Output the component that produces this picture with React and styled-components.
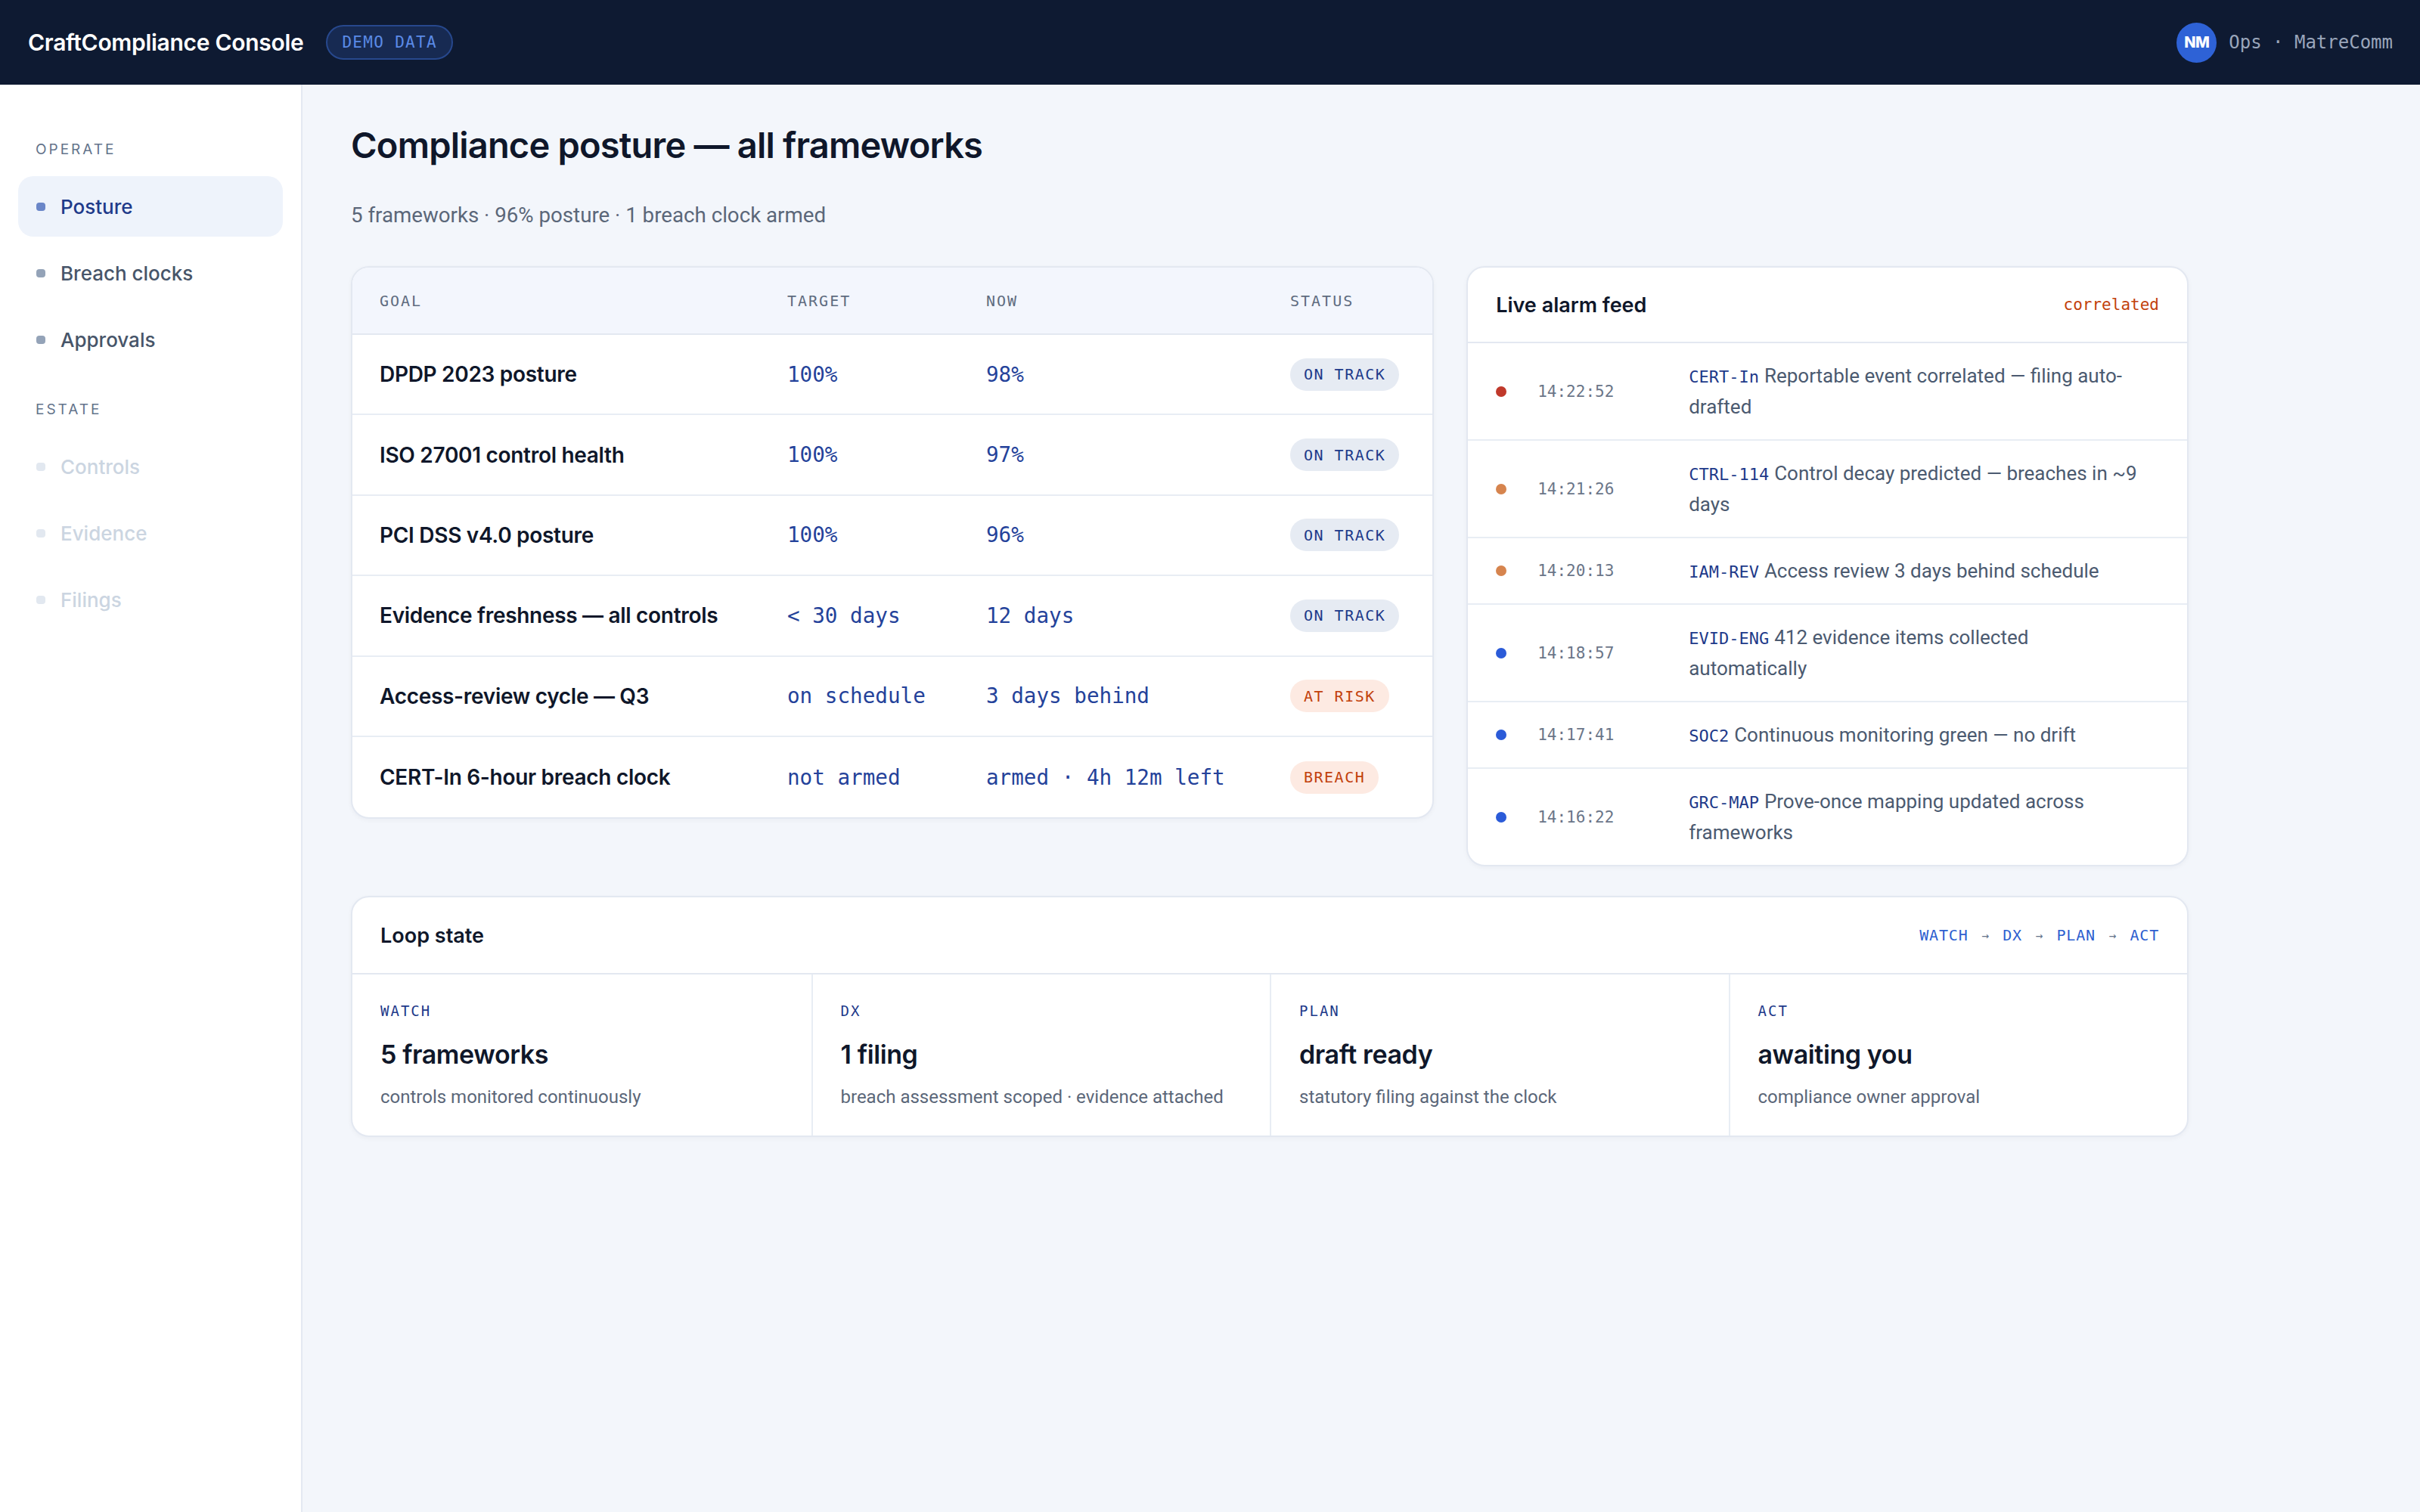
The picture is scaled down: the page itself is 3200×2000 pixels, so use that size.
import React from 'react';
import styled, { createGlobalStyle } from 'styled-components';

const DISPLAY = '"Inter", "Noto Sans", sans-serif';
const BODY = '"Roboto", "Noto Sans", sans-serif';
const MONO = '"DejaVu Sans Mono", "Liberation Mono", monospace';

const GlobalStyle = createGlobalStyle`
  html, body {
    margin: 0;
    padding: 0;
    background: #f3f6fb;
    font-family: ${BODY};
  }
  * { box-sizing: border-box; }
`;

const goals = [
  { name: 'DPDP 2023 posture', target: '100%', now: '98%', status: 'ON TRACK', tone: 'ok' },
  { name: 'ISO 27001 control health', target: '100%', now: '97%', status: 'ON TRACK', tone: 'ok' },
  { name: 'PCI DSS v4.0 posture', target: '100%', now: '96%', status: 'ON TRACK', tone: 'ok' },
  { name: 'Evidence freshness — all controls', target: '< 30 days', now: '12 days', status: 'ON TRACK', tone: 'ok' },
  { name: 'Access-review cycle — Q3', target: 'on schedule', now: '3 days behind', status: 'AT RISK', tone: 'bad' },
  { name: 'CERT-In 6-hour breach clock', target: 'not armed', now: 'armed · 4h 12m left', status: 'BREACH', tone: 'bad' },
];

const alarms = [
  { level: 'red', time: '14:22:52', code: 'CERT-In', text: 'Reportable event correlated — filing auto-drafted' },
  { level: 'orange', time: '14:21:26', code: 'CTRL-114', text: 'Control decay predicted — breaches in ~9 days' },
  { level: 'orange', time: '14:20:13', code: 'IAM-REV', text: 'Access review 3 days behind schedule' },
  { level: 'blue', time: '14:18:57', code: 'EVID-ENG', text: '412 evidence items collected automatically' },
  { level: 'blue', time: '14:17:41', code: 'SOC2', text: 'Continuous monitoring green — no drift' },
  { level: 'blue', time: '14:16:22', code: 'GRC-MAP', text: 'Prove-once mapping updated across frameworks' },
];

const loop = [
  { stage: 'WATCH', value: '5 frameworks', note: 'controls monitored continuously' },
  { stage: 'DX', value: '1 filing', note: 'breach assessment scoped · evidence attached' },
  { stage: 'PLAN', value: 'draft ready', note: 'statutory filing against the clock' },
  { stage: 'ACT', value: 'awaiting you', note: 'compliance owner approval' },
];

const nav = [
  { title: 'OPERATE', items: [
    { label: 'Posture', state: 'active' },
    { label: 'Breach clocks', state: 'idle' },
    { label: 'Approvals', state: 'idle' },
  ] },
  { title: 'ESTATE', items: [
    { label: 'Controls', state: 'muted' },
    { label: 'Evidence', state: 'muted' },
    { label: 'Filings', state: 'muted' },
  ] },
];

const dotColors = { red: '#c0392b', orange: '#d6844e', blue: '#2b5bd8' };

const navText = { active: '#1e3a8a', idle: '#475569', muted: '#cbd5e1' };
const navDot = { active: '#6a86c8', idle: '#94a3b8', muted: '#e2e8f0' };

function App() {
  return (
    <>
      <GlobalStyle />
      <Shell>
        <TopBar>
          <Brand>
            <BrandName>CraftCompliance Console</BrandName>
            <DemoPill>DEMO DATA</DemoPill>
          </Brand>
          <User>
            <Avatar>NM</Avatar>
            <UserMeta>Ops · MatreComm</UserMeta>
          </User>
        </TopBar>

        <Body>
          <Sidebar>
            {nav.map((section) => (
              <NavSection key={section.title}>
                <SectionLabel>{section.title}</SectionLabel>
                <NavList>
                  {section.items.map((item) => (
                    <NavItem key={item.label} $state={item.state}>
                      <NavDot $state={item.state} />
                      {item.label}
                    </NavItem>
                  ))}
                </NavList>
              </NavSection>
            ))}
          </Sidebar>

          <Main>
            <Content>
              <Title>Compliance posture — all frameworks</Title>
              <Subtitle>5 frameworks · 96% posture · 1 breach clock armed</Subtitle>

              <TopGrid>
                <Card>
                  <GoalHead>
                    <HeadCell>GOAL</HeadCell>
                    <HeadCell>TARGET</HeadCell>
                    <HeadCell>NOW</HeadCell>
                    <HeadCell>STATUS</HeadCell>
                  </GoalHead>
                  {goals.map((g) => (
                    <GoalRow key={g.name}>
                      <GoalName>{g.name}</GoalName>
                      <Metric>{g.target}</Metric>
                      <Metric>{g.now}</Metric>
                      <div>
                        <StatusPill $tone={g.tone}>{g.status}</StatusPill>
                      </div>
                    </GoalRow>
                  ))}
                </Card>

                <Card>
                  <CardHeader>
                    <CardTitle>Live alarm feed</CardTitle>
                    <Correlated>correlated</Correlated>
                  </CardHeader>
                  {alarms.map((a) => (
                    <AlarmRow key={a.time}>
                      <AlarmDot $level={a.level} />
                      <AlarmTime>{a.time}</AlarmTime>
                      <AlarmText>
                        <AlarmCode>{a.code}</AlarmCode>{a.text}
                      </AlarmText>
                    </AlarmRow>
                  ))}
                </Card>
              </TopGrid>

              <Card>
                <CardHeader $tall>
                  <CardTitle>Loop state</CardTitle>
                  <Flow>
                    <span>WATCH</span><Arrow>→</Arrow>
                    <span>DX</span><Arrow>→</Arrow>
                    <span>PLAN</span><Arrow>→</Arrow>
                    <span>ACT</span>
                  </Flow>
                </CardHeader>
                <LoopGrid>
                  {loop.map((l) => (
                    <LoopCell key={l.stage}>
                      <StageLabel>{l.stage}</StageLabel>
                      <StageValue>{l.value}</StageValue>
                      <StageNote>{l.note}</StageNote>
                    </LoopCell>
                  ))}
                </LoopGrid>
              </Card>
            </Content>
          </Main>
        </Body>
      </Shell>
    </>
  );
}

export default App;

const Shell = styled.div`
  min-height: 100vh;
  display: flex;
  flex-direction: column;
`;

const TopBar = styled.header`
  height: 112px;
  flex-shrink: 0;
  background: #0e1a32;
  display: flex;
  align-items: center;
  justify-content: space-between;
  padding: 0 36px 0 37px;
`;

const Brand = styled.div`
  display: flex;
  align-items: center;
  gap: 30px;
`;

const BrandName = styled.div`
  font-family: ${DISPLAY};
  font-weight: 600;
  font-size: 30px;
  letter-spacing: -0.3px;
  color: #ffffff;
`;

const DemoPill = styled.span`
  font-family: ${MONO};
  font-size: 21px;
  letter-spacing: 1.3px;
  color: #5b8ae6;
  background: #172a52;
  border: 2px solid #27488d;
  border-radius: 999px;
  height: 46px;
  padding: 0 19px;
  display: flex;
  align-items: center;
`;

const User = styled.div`
  display: flex;
  align-items: center;
  gap: 16px;
`;

const Avatar = styled.div`
  width: 53px;
  height: 53px;
  border-radius: 50%;
  background: #2e62d6;
  color: #ffffff;
  font-family: ${DISPLAY};
  font-weight: 800;
  font-size: 20px;
  letter-spacing: -0.5px;
  display: flex;
  align-items: center;
  justify-content: center;
`;

const UserMeta = styled.span`
  font-family: ${MONO};
  font-size: 24px;
  color: #9aa6bb;
`;

const Body = styled.div`
  flex: 1;
  display: flex;
`;

const Sidebar = styled.nav`
  width: 400px;
  flex-shrink: 0;
  background: #ffffff;
  border-right: 2px solid #e4e9f2;
  padding: 76px 24px 40px;
  display: flex;
  flex-direction: column;
  gap: 43px;
`;

const NavSection = styled.div``;

const SectionLabel = styled.div`
  font-family: ${DISPLAY};
  font-size: 19px;
  line-height: 20px;
  letter-spacing: 3px;
  color: #64748b;
  padding-left: 23px;
  margin-bottom: 25px;
`;

const NavList = styled.div`
  display: flex;
  flex-direction: column;
  gap: 8px;
`;

const NavItem = styled.div`
  height: 80px;
  border-radius: 20px;
  display: flex;
  align-items: center;
  gap: 20px;
  padding-left: 24px;
  font-family: ${DISPLAY};
  font-weight: 500;
  font-size: 26px;
  color: ${(p) => navText[p.$state]};
  background: ${(p) => (p.$state === 'active' ? '#eef3fb' : 'transparent')};
`;

const NavDot = styled.span`
  width: 12px;
  height: 11px;
  border-radius: 4px;
  background: ${(p) => navDot[p.$state]};
`;

const Main = styled.main`
  flex: 1;
  padding: 52px 64px 64px;
`;

const Content = styled.div`
  max-width: 2430px;
`;

const Title = styled.h1`
  margin: 0 0 48px;
  font-family: ${DISPLAY};
  font-weight: 600;
  font-size: 47px;
  line-height: 56px;
  letter-spacing: -0.8px;
  color: #0f172a;
`;

const Subtitle = styled.p`
  margin: 0 0 50px;
  font-family: ${BODY};
  font-size: 27.7px;
  line-height: 34px;
  color: #5b6779;
`;

const TopGrid = styled.div`
  display: grid;
  grid-template-columns: 3fr 2fr;
  gap: 43px;
  align-items: start;
  margin-bottom: 39px;
`;

const Card = styled.section`
  background: #ffffff;
  border: 2px solid #e3e8f1;
  border-radius: 24px;
  overflow: hidden;
  box-shadow: 0 2px 6px rgba(15, 23, 42, 0.04);
`;

const goalColumns = '539px 263px 402px 1fr';

const GoalHead = styled.div`
  display: grid;
  grid-template-columns: ${goalColumns};
  align-items: center;
  height: 89px;
  padding: 0 30px 0 36px;
  background: #f3f6fd;
  border-bottom: 2px solid #e3e8f1;
`;

const HeadCell = styled.div`
  font-family: ${MONO};
  font-size: 20px;
  letter-spacing: 2px;
  color: #5f6c80;
`;

const GoalRow = styled.div`
  display: grid;
  grid-template-columns: ${goalColumns};
  align-items: center;
  height: 106.4px;
  padding: 0 30px 0 36px;
  border-bottom: 2px solid #e8edf4;
  &:last-child { border-bottom: none; }
`;

const GoalName = styled.div`
  font-family: ${DISPLAY};
  font-weight: 600;
  font-size: 28px;
  letter-spacing: -0.3px;
  color: #0f172a;
`;

const Metric = styled.div`
  font-family: ${MONO};
  font-size: 27.6px;
  color: #24429a;
  white-space: nowrap;
`;

const StatusPill = styled.span`
  display: inline-flex;
  align-items: center;
  white-space: nowrap;
  height: 43px;
  padding: 0 18px;
  border-radius: 999px;
  font-family: ${MONO};
  font-size: 20px;
  letter-spacing: 1.5px;
  color: ${(p) => (p.$tone === 'bad' ? '#c2410c' : '#1e3a8a')};
  background: ${(p) => (p.$tone === 'bad' ? '#fdeae2' : '#e6ebf3')};
`;

const CardHeader = styled.div`
  display: flex;
  align-items: center;
  justify-content: space-between;
  height: ${(p) => (p.$tall ? '102px' : '100px')};
  padding: 0 37px;
  border-bottom: 2px solid #e3e8f1;
`;

const CardTitle = styled.h2`
  margin: 0;
  font-family: ${DISPLAY};
  font-weight: 600;
  font-size: 27px;
  color: #0f172a;
`;

const Correlated = styled.span`
  font-family: ${MONO};
  font-size: 21px;
  color: #c2410c;
`;

const AlarmRow = styled.div`
  display: grid;
  grid-template-columns: 55px 200px 1fr;
  align-items: center;
  padding: 22.5px 37px;
  border-bottom: 2px solid #e8edf4;
  &:last-child { border-bottom: none; }
`;

const AlarmDot = styled.span`
  width: 14px;
  height: 14px;
  border-radius: 50%;
  background: ${(p) => dotColors[p.$level]};
`;

const AlarmTime = styled.span`
  font-family: ${MONO};
  font-size: 21px;
  color: #6b7689;
`;

const AlarmText = styled.div`
  font-family: ${BODY};
  font-size: 26px;
  line-height: 41px;
  color: #4b5a70;
  padding-right: 24px;
`;

const AlarmCode = styled.span`
  font-family: ${MONO};
  font-size: 22px;
  line-height: 1;
  color: #1e3a8a;
  margin-right: 7px;
`;

const Flow = styled.div`
  font-family: ${MONO};
  font-size: 20px;
  letter-spacing: 0.8px;
  color: #2e5fd0;
  display: flex;
  align-items: center;
  gap: 18px;
`;

const Arrow = styled.span`
  font-size: 16px;
  color: #64748b;
  letter-spacing: 0;
`;

const LoopGrid = styled.div`
  display: grid;
  grid-template-columns: repeat(4, 1fr);
`;

const LoopCell = styled.div`
  padding: 36px 37px 36px;
  border-left: 2px solid #e8edf4;
  &:first-child { border-left: none; }
`;

const StageLabel = styled.div`
  font-family: ${MONO};
  font-size: 19px;
  line-height: 24px;
  letter-spacing: 2px;
  color: #1e3a8a;
  margin-bottom: 25px;
`;

const StageValue = styled.div`
  font-family: ${DISPLAY};
  font-weight: 600;
  font-size: 34px;
  line-height: 42px;
  letter-spacing: -0.4px;
  color: #0f172a;
  margin-bottom: 20px;
`;

const StageNote = styled.div`
  font-family: ${BODY};
  font-size: 24px;
  line-height: 30px;
  color: #5b6779;
`;
